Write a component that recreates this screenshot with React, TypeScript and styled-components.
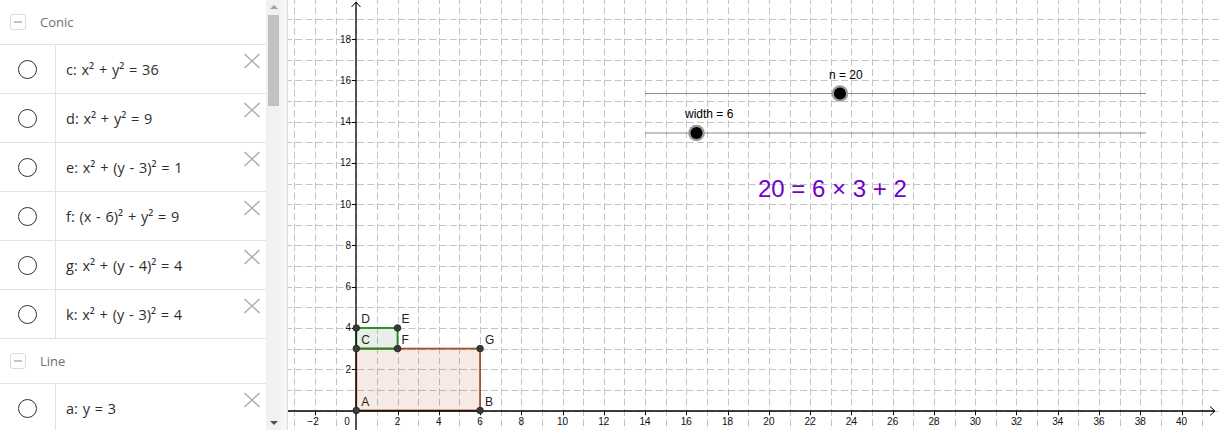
import React from "react";
import styled, { createGlobalStyle } from "styled-components";

const GlobalStyle = createGlobalStyle`
    html, body { margin: 0; padding: 0; background: #fff; overflow: hidden; }
    body { font-family: "Open Sans", "Liberation Sans", sans-serif; }
`;

const Page = styled.div`
    display: flex;
    width: 1219px;
    height: 430px;
    overflow: hidden;
`;

const AlgebraPanel = styled.div`
    width: 266px;
    flex: none;
    display: flex;
    flex-direction: column;
    overflow: hidden;
    background: #fff;
`;

const GroupHeader = styled.div`
    height: 44px;
    flex: none;
    display: flex;
    align-items: center;
    gap: 14px;
    padding-left: 10px;
    border-bottom: 1px solid #e2e2e2;
`;

const CollapseBox = styled.span`
    width: 14px;
    height: 14px;
    border: 1px solid #dcdcdc;
    border-radius: 3px;
    display: flex;
    align-items: center;
    justify-content: center;
    &::after {
        content: "";
        width: 8px;
        height: 2px;
        background: #c4c4c4;
    }
`;

const GroupTitle = styled.span`
    font-size: 13px;
    color: #707070;
`;

const ItemRow = styled.div`
    height: 48px;
    flex: none;
    display: flex;
    border-bottom: 1px solid #e2e2e2;
`;

const MarbleCell = styled.div`
    width: 55px;
    flex: none;
    display: flex;
    align-items: center;
    justify-content: center;
    border-right: 1px solid #e2e2e2;
`;

const Marble = styled.span`
    width: 17px;
    height: 17px;
    border: 1.3px solid #333;
    border-radius: 50%;
    margin-right: 1px;
`;

const Formula = styled.div`
    flex: 1;
    display: flex;
    align-items: center;
    padding-left: 10px;
    font-size: 14.5px;
    word-spacing: 1px;
    color: #2e2e2e;
    white-space: nowrap;
`;

const DeleteButton = styled.span`
    flex: none;
    align-self: flex-start;
    margin: 8px 5px 0 0;
    width: 18px;
    height: 16px;
    display: flex;
`;

const ScrollTrack = styled.div`
    width: 15px;
    flex: none;
    background: #f1f1f1;
    display: flex;
    flex-direction: column;
    align-items: center;
`;

const ScrollArrow = styled.span<{ $down?: boolean }>`
    height: 14px;
    display: flex;
    align-items: center;
    justify-content: center;
    width: 100%;
    &::after {
        content: "";
        border-left: 4px solid transparent;
        border-right: 4px solid transparent;
        ${({ $down }) => ($down ? "border-top: 4px solid #505050;" : "border-bottom: 4px solid #a0a0a0;")}
    }
`;

const ScrollThumb = styled.span`
    width: 11px;
    height: 91px;
    background: #c1c1c1;
    margin-top: 1px;
`;

const ScrollSpacer = styled.span`
    flex: 1;
`;

const Splitter = styled.div`
    width: 6px;
    flex: none;
    background: #f7f7f7;
    border-right: 1px solid #dcdcdc;
`;

const GraphicsView = styled.div`
    flex: 1;
    position: relative;
    overflow: hidden;
    background: #fff;
`;

const GraphSvg = styled.svg`
    display: block;
    font-family: "Liberation Sans", Arial, sans-serif;
`;

type Item = { label: string; formula: string };
type Group = { title: string; items: Item[] };

const groups: Group[] = [
    {
        title: "Conic",
        items: [
            { label: "c", formula: "x² + y² = 36" },
            { label: "d", formula: "x² + y² = 9" },
            { label: "e", formula: "x² + (y - 3)² = 1" },
            { label: "f", formula: "(x - 6)² + y² = 9" },
            { label: "g", formula: "x² + (y - 4)² = 4" },
            { label: "k", formula: "x² + (y - 3)² = 4" },
        ],
    },
    {
        title: "Line",
        items: [{ label: "a", formula: "y = 3" }],
    },
];

const CrossIcon = () => (
    <svg width="18" height="16" viewBox="0 0 18 16">
        <path d="M1.5 1 L16.5 15 M16.5 1 L1.5 15" stroke="#b0b0b0" strokeWidth="1.6" fill="none" />
    </svg>
);

// graphics coordinate system (page pixels)
const LEFT = 288;
const W = 1219 - LEFT;
const H = 430;
const X0 = 356.3;
const Y0 = 410.5;
const S = 20.63;
const px = (x: number) => X0 + x * S;
const py = (y: number) => Y0 - y * S;
const crisp = (v: number) => Math.round(v) + 0.5;

const points = [
    { name: "A", x: 0, y: 0, dx: 5, dy: -5 },
    { name: "B", x: 6, y: 0, dx: 5, dy: -5 },
    { name: "C", x: 0, y: 3, dx: 5, dy: -5 },
    { name: "D", x: 0, y: 4, dx: 5, dy: -5 },
    { name: "E", x: 2, y: 4, dx: 4, dy: -5 },
    { name: "F", x: 2, y: 3, dx: 4, dy: -5 },
    { name: "G", x: 6, y: 3, dx: 5, dy: -5 },
];

const sliders = [
    { label: "n = 20", y: 93.5, knob: 840, labelX: 829 },
    { label: "width = 6", y: 133, knob: 696.5, labelX: 685 },
];

const Graph = () => {
    const vLines: number[] = [];
    for (let i = -4; i <= 42; i++) vLines.push(i);
    const hLines: number[] = [];
    for (let j = -1; j <= 21; j++) hLines.push(j);
    const xLabels: number[] = [];
    for (let i = -2; i <= 40; i += 2) if (i !== 0) xLabels.push(i);
    const yLabels: number[] = [];
    for (let j = 2; j <= 18; j += 2) yLabels.push(j);
    const ax = crisp(X0) - 0.5;
    const ay = crisp(Y0) - 0.5;

    return (
        <GraphSvg width={W} height={H} viewBox={`${LEFT} 0 ${W} ${H}`}>
            <g stroke="#c4c4c4" strokeWidth="1" strokeDasharray="7 3.3">
                {vLines.map((i) => (
                    <line key={`v${i}`} x1={crisp(px(i))} y1={0} x2={crisp(px(i))} y2={H} strokeDashoffset={3} />
                ))}
                {hLines.map((j) => (
                    <line key={`h${j}`} x1={LEFT} y1={crisp(py(j))} x2={1219} y2={crisp(py(j))} strokeDashoffset={3} />
                ))}
            </g>

            {/* polygons */}
            <rect x={px(0)} y={py(3)} width={6 * S} height={3 * S} fill="rgba(153,51,0,0.1)" stroke="#a0522d" strokeWidth="1.8" />
            <rect x={px(0)} y={py(4)} width={2 * S} height={S} fill="rgba(0,80,0,0.09)" stroke="#1a8a1a" strokeWidth="1.8" />

            {/* axes */}
            <g stroke="#000" strokeWidth="1.3" fill="none">
                <line x1={LEFT} y1={ay} x2={1215} y2={ay} />
                <path d={`M1210 ${ay - 4.5} L1215 ${ay} L1210 ${ay + 4.5}`} strokeWidth="1" />
                <line x1={ax} y1={H} x2={ax} y2={2} />
                <path d={`M${ax - 4.5} 7 L${ax} 2 L${ax + 4.5} 7`} strokeWidth="1" />
            </g>
            <g stroke="#000" strokeWidth="1">
                {xLabels.map((i) => (
                    <line key={`tx${i}`} x1={crisp(px(i))} y1={ay} x2={crisp(px(i))} y2={ay + 4} />
                ))}
                {yLabels.map((j) => (
                    <line key={`ty${j}`} x1={ax - 4} y1={crisp(py(j))} x2={ax} y2={crisp(py(j))} />
                ))}
            </g>
            <g fontSize="10" fill="#111">
                {xLabels.map((i) => (
                    <text key={`lx${i}`} x={px(i) + (i < 0 ? -2 : 0)} y={425} textAnchor="middle">
                        {i < 0 ? `\u2212${-i}` : i}
                    </text>
                ))}
                {yLabels.map((j) => (
                    <text key={`ly${j}`} x={351} y={py(j) + 3.5} textAnchor="end">
                        {j}
                    </text>
                ))}
                <text x={347} y={425} textAnchor="middle">0</text>
            </g>

            {/* points */}
            {points.map((p) => (
                <g key={p.name}>
                    <circle cx={px(p.x)} cy={py(p.y)} r={3.3} fill="#3a3a3a" stroke="#222" strokeWidth="0.8" />
                    <text x={px(p.x) + p.dx} y={py(p.y) + p.dy} fontSize="12" fill="#222">
                        {p.name}
                    </text>
                </g>
            ))}

            {/* sliders */}
            {sliders.map((s) => (
                <g key={s.label}>
                    <line x1={645} y1={s.y} x2={1146} y2={s.y} stroke="#8c8c8c" strokeWidth="1" />
                    <circle cx={s.knob} cy={s.y} r={8.3} fill="#9a9a9a" />
                    <circle cx={s.knob} cy={s.y} r={6} fill="#000" />
                    <text x={s.labelX} y={s.y - 15} fontSize="12" fill="#000">
                        {s.label}
                    </text>
                </g>
            ))}

            <text x={758} y={197} fontSize="24" fill="#7000cc">
                20 = 6 × 3 + 2
            </text>
        </GraphSvg>
    );
};

const App = () => (
    <Page>
        <GlobalStyle />
        <AlgebraPanel>
            {groups.map((g) => (
                <React.Fragment key={g.title}>
                    <GroupHeader>
                        <CollapseBox />
                        <GroupTitle>{g.title}</GroupTitle>
                    </GroupHeader>
                    {g.items.map((it) => (
                        <ItemRow key={it.label}>
                            <MarbleCell>
                                <Marble />
                            </MarbleCell>
                            <Formula>
                                {it.label}: {it.formula}
                            </Formula>
                            <DeleteButton>
                                <CrossIcon />
                            </DeleteButton>
                        </ItemRow>
                    ))}
                </React.Fragment>
            ))}
        </AlgebraPanel>
        <ScrollTrack>
            <ScrollArrow />
            <ScrollThumb />
            <ScrollSpacer />
            <ScrollArrow $down />
        </ScrollTrack>
        <Splitter />
        <GraphicsView>
            <Graph />
        </GraphicsView>
    </Page>
);

export default App;
